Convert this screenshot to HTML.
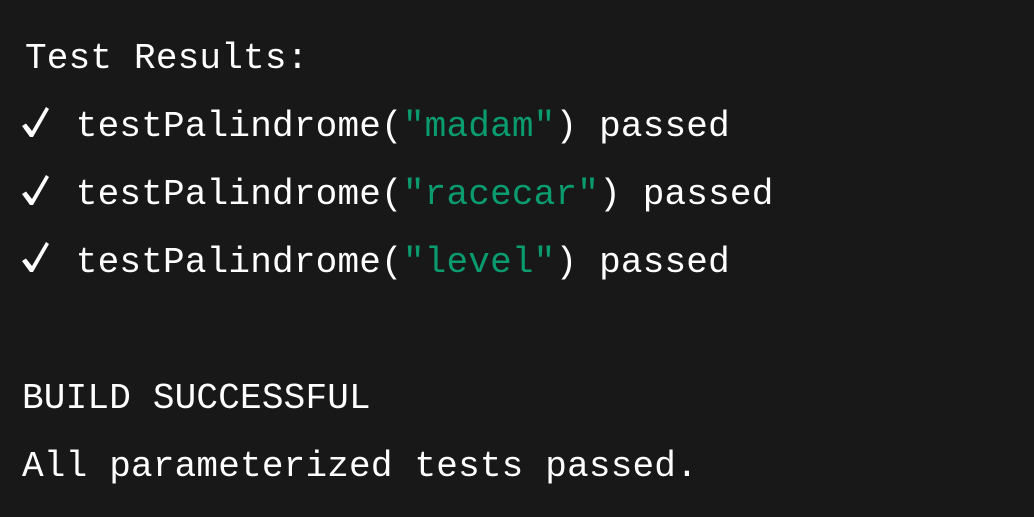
<!DOCTYPE html>
<html><head><meta charset="utf-8"><style>
html,body{margin:0;padding:0;background:#181818;width:1034px;height:517px;overflow:hidden}
pre{margin:0;position:absolute;left:22px;top:25px;font-family:"Liberation Mono","DejaVu Sans Mono",monospace;font-size:36px;letter-spacing:0.2px;line-height:68px;color:#fff;white-space:pre}
.g{color:#0a9b6e}
.c{display:inline-block;width:32px;height:0}
svg.k{position:absolute;left:21px}
</style></head><body>
<pre><span style="margin-left:3px">Test Results:</span>
<span class="c"></span> testPalindrome(<span class="g">"madam"</span>) passed
<span class="c"></span> testPalindrome(<span class="g">"racecar"</span>) passed
<span class="c"></span> testPalindrome(<span class="g">"level"</span>) passed

BUILD SUCCESSFUL
All parameterized tests passed.</pre>
<svg class="k" style="top:106px" width="30" height="34" viewBox="0 0 30 34"><path d="M1 20 L5 17.5 L11 25 L25 1 L28 3 L12 31 L9 31 Z" fill="#fff"/></svg>
<svg class="k" style="top:174px" width="30" height="34" viewBox="0 0 30 34"><path d="M1 20 L5 17.5 L11 25 L25 1 L28 3 L12 31 L9 31 Z" fill="#fff"/></svg>
<svg class="k" style="top:241px" width="30" height="34" viewBox="0 0 30 34"><path d="M1 20 L5 17.5 L11 25 L25 1 L28 3 L12 31 L9 31 Z" fill="#fff"/></svg>
</body></html>
